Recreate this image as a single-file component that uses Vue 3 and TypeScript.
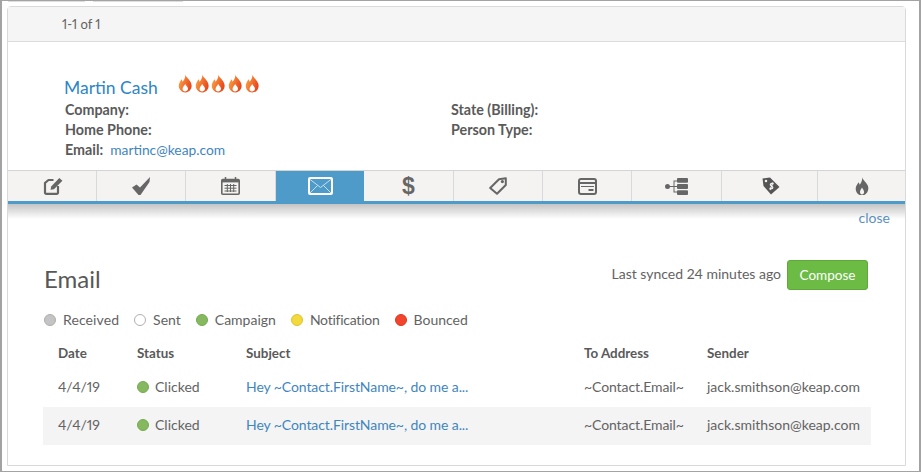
<script setup lang="ts">
const fields = [
  { label: 'Company:', value: '' },
  { label: 'Home Phone:', value: '' },
  { label: 'Email:', value: 'martinc@keap.com' },
]
const rightFields = ['State (Billing):', 'Person Type:']
const legend = [
  { name: 'Received', cls: 'grey' },
  { name: 'Sent', cls: 'white' },
  { name: 'Campaign', cls: 'green' },
  { name: 'Notification', cls: 'yellow' },
  { name: 'Bounced', cls: 'red' },
]
const rows = [0, 1]
const flames = [0, 1, 2, 3, 4]
const flamePath = 'M7.5 0.5C8 3 11.5 5 12.8 8.5C14.2 12.5 11.5 16.5 7.5 16.5C3.5 16.5 0.8 13 1.8 9C2.3 7 3.4 6 4 4.6C4.6 5.4 4.8 6.2 5 7C6.5 5.4 7.8 3 7.5 0.5ZM7.4 9C6.9 10.4 5 11.5 5 13.4C5 14.8 6 15.6 7.4 15.6C8.9 15.6 9.9 14.7 9.9 13.3C9.9 11.6 8 10.5 7.4 9Z'
</script>

<template>
  <div class="page">
    <div class="cut-off">
      <span class="cut-a"></span>
      <span class="cut-b"></span>
    </div>
    <div class="card">
      <div class="pager">1-1 of 1</div>
      <div class="contact">
        <div class="name-row">
          <a class="name">Martin Cash</a>
          <div class="flames">
            <svg v-for="f in flames" :key="f" class="flame" viewBox="0 0 15 17">
              <defs>
                <linearGradient :id="'fg' + f" x1="0" y1="0" x2="1" y2="0.5">
                  <stop offset="0" stop-color="#fbae4a" />
                  <stop offset="1" stop-color="#e9481b" />
                </linearGradient>
              </defs>
              <path :d="flamePath" :fill="'url(#fg' + f + ')'" fill-rule="evenodd" />
            </svg>
          </div>
        </div>
        <div class="fields">
          <div class="col">
            <div v-for="x in fields" :key="x.label" class="field">
              <b>{{ x.label }}</b><a v-if="x.value" class="link">{{ x.value }}</a>
            </div>
          </div>
          <div class="col">
            <div v-for="x in rightFields" :key="x" class="field"><b>{{ x }}</b></div>
          </div>
        </div>
      </div>

      <div class="tabs">
        <div class="tab">
          <svg class="i-edit" viewBox="0 0 20 18" width="20" height="18" fill="none" stroke="#666">
            <path d="M10.5 3H5.5L2 6V15.6A1.2 1.2 0 0 0 3.2 16.8H13.8A1.2 1.2 0 0 0 15 15.6V9" stroke-width="2.2" />
            <path d="M7.5 12.8L8.2 9.6L16.3 1L19.4 3.7L11 12.2Z" fill="#666" stroke="none" />
          </svg>
        </div>
        <div class="tab">
          <svg viewBox="0 0 18 18" width="18" height="18">
            <path d="M0 10.5L4.5 7.5L8 10.5L18 0L17.5 5L8.5 18H6.5Z" fill="#666" />
          </svg>
        </div>
        <div class="tab">
          <svg viewBox="0 0 19 18" width="19" height="18" fill="none" stroke="#666">
            <rect x="0.8" y="2.5" width="17.4" height="14.7" rx="1" stroke-width="1.6" />
            <path d="M1 4.2H18" stroke-width="2.4" />
            <path d="M4.5 0V3.5M14.5 0V3.5" stroke-width="1.5" />
            <path d="M3.5 8.5H15.5M3.5 11.2H15.5M3.5 14H15.5M6.3 7V15M9.5 7V15M12.7 7V15" stroke-width="1" />
          </svg>
        </div>
        <div class="tab active">
          <svg viewBox="0 0 25 18" width="25" height="18" fill="none">
            <rect x="1" y="1" width="23" height="16" rx="1" stroke="#fff" stroke-width="2" />
            <path d="M1.5 2L12.5 10.5L23.5 2M1.5 16.5L9.5 8.5M23.5 16.5L15.5 8.5" stroke="#d4e7f3" stroke-width="0.9" />
          </svg>
        </div>
        <div class="tab"><span class="dollar">$</span></div>
        <div class="tab">
          <svg viewBox="0 0 18 18" width="18" height="18" fill="none" stroke="#666" stroke-width="2" stroke-linejoin="round">
            <path d="M1.2 11L10 2.2L16.8 1.2L16.8 8L8 16.8Z" />
            <circle cx="13.4" cy="4.6" r="1.6" fill="#666" stroke="none" />
          </svg>
        </div>
        <div class="tab">
          <svg viewBox="0 0 19 17" width="19" height="17" fill="none" stroke="#666">
            <rect x="1" y="1" width="17" height="15" rx="2" stroke-width="2" />
            <path d="M1 5H18" stroke-width="2" />
            <path d="M3 8.5H16" stroke-width="1" />
            <path d="M10.5 12H15.5" stroke-width="2" />
          </svg>
        </div>
        <div class="tab">
          <svg viewBox="0 0 23 17" width="23" height="17" fill="#666">
            <circle cx="2.5" cy="8.5" r="2.5" />
            <path d="M2.5 8H13V9H2.5Z" />
            <path d="M8.5 2.5H13V3.5H9.5V13.5H13V14.5H8.5Z" />
            <rect x="12" y="0" width="11" height="4.8" rx="1" />
            <rect x="12" y="6.1" width="11" height="4.8" rx="1" />
            <rect x="12" y="12.2" width="11" height="4.8" rx="1" />
          </svg>
        </div>
        <div class="tab">
          <svg class="i-price" viewBox="0 0 18 18" width="18" height="18">
            <path fill-rule="evenodd" fill="#555" d="M0.5 1.5L8 0.5L17.5 10L9 17.5L1.5 9ZM4 2.7A1.3 1.3 0 1 0 4 5.3A1.3 1.3 0 1 0 4 2.7Z" />
            <path d="M11.6 7.2C10.6 6 8.6 6.2 8.3 7.6C8 9 11 9 10.8 10.6C10.6 12 8.6 12.2 7.6 11M11 5.5L8 13" fill="none" stroke="#f4f3f1" stroke-width="1.2" />
          </svg>
        </div>
        <div class="tab">
          <svg viewBox="0 0 14 18.5" width="14" height="18.5">
            <path fill-rule="evenodd" fill="#666" d="M7.2 0C7.6 3 11 5 12.8 8.5C14.6 12.8 11.8 18.5 7 18.5C2.4 18.5 -0.4 13.6 1.1 9.5C1.8 7.8 2.9 6.8 3.5 5.3C4.1 6 4.5 6.9 4.6 7.8C6.2 6 7.6 3 7.2 0ZM7 10.5C6.5 12 5 13 5 15C5 16.4 5.8 17.4 7 17.4C8.3 17.4 9.1 16.4 9.1 15C9.1 13 7.5 12 7 10.5Z" />
          </svg>
        </div>
      </div>
      <div class="shadow">
        <a class="close">close</a>
      </div>

      <div class="email">
        <div class="email-head">
          <h2>Email</h2>
          <div class="sync">
            <span class="sync-text">Last synced 24 minutes ago</span>
            <button class="compose" type="button">Compose</button>
          </div>
        </div>
        <div class="legend">
          <span v-for="l in legend" :key="l.name" class="legend-item">
            <i class="dot" :class="l.cls"></i><span class="legend-text">{{ l.name }}</span>
          </span>
        </div>
        <table>
          <thead>
            <tr>
              <th class="c-date">Date</th>
              <th class="c-status">Status</th>
              <th class="c-subject">Subject</th>
              <th class="c-to">To Address</th>
              <th class="c-sender">Sender</th>
            </tr>
          </thead>
          <tbody>
            <tr v-for="r in rows" :key="r">
              <td>4/4/19</td>
              <td class="status"><i class="dot green"></i>Clicked</td>
              <td class="tight"><a class="link">Hey ~Contact.FirstName~, do me a...</a></td>
              <td class="tight">~Contact.Email~</td>
              <td>jack.smithson@keap.com</td>
            </tr>
          </tbody>
        </table>
      </div>
    </div>
  </div>
</template>

<style>
html, body { margin: 0; background: #fff; }
</style>

<style scoped>
.page {
  width: 921px;
  height: 472px;
  box-sizing: border-box;
  border-left: 2px solid #a3a3a3;
  border-top: 1px solid #a3a3a3;
  border-right: 2px solid #a3a3a3;
  border-bottom: 1px solid #a3a3a3;
  padding: 0 13px 5px 5px;
  font-family: "Lato", "Open Sans", sans-serif;
  font-size: 14px;
  font-variant-numeric: proportional-nums;
  color: #636363;
  overflow: hidden;
  display: flex;
  flex-direction: column;
}
.cut-off { display: flex; height: 1px; margin-bottom: 4px; flex: none; }
.cut-off span { height: 1px; background: #dedede; }
.cut-a { width: 77px; margin-left: 1px; margin-right: 8px; }
.cut-b { width: 90px; }
.card {
  flex: 1;
  min-height: 0;
  box-sizing: border-box;
  border: 1px solid #d9d9d9;
  border-top-left-radius: 4px;
  border-top-right-radius: 4px;
}
.pager {
  height: 34px;
  line-height: 35px;
  padding-left: 54px;
  background: #f5f5f5;
  border-bottom: 1px solid #dcdcdc;
  font-size: 13px;
}
.contact { height: 128px; padding: 33px 0 0 57px; box-sizing: border-box; }
.name-row { display: flex; align-items: center; height: 25px; }
.name { color: #2d86c4; font-size: 17.5px; width: 113px; margin-left: -1px; }
.flames { display: flex; align-self: flex-start; margin-top: -1px; }
.flame { width: 16.67px; height: 19px; }
.fields { display: flex; }
.col { width: 386px; }
.field { height: 20px; line-height: 20px; }
.field b { font-weight: 700; font-size: 14.3px; color: #5a5a5a; margin-right: 7px; }
.field .link { font-size: 13.8px; }
.link { color: #3f86bd; }
.tabs {
  display: grid;
  grid-template-columns: 89px 89px 90px 88px 90px 89px 89px 90px 96px 1fr;
  height: 30px;
  background: #f4f3f1;
  border-top: 1px solid #d4d4d4;
}
.tab {
  display: flex;
  align-items: center;
  justify-content: center;
  border-right: 1px solid #d9d9d9;
  box-sizing: border-box;
}
.tab:last-child { border-right: 0; }
.tab.active { background: #4e9bc9; border-right: 0; }
.i-edit { margin-left: 2px; }
.i-price { margin-left: 2px; margin-top: -1px; }
.dollar {
  font-family: "Liberation Sans", sans-serif;
  font-weight: 700;
  font-size: 23px;
  line-height: 1;
  color: #666;
}
.shadow {
  border-top: 3px solid #4e9bc9;
  height: 30px;
  background: linear-gradient(#c4c4c4, #fff 15px);
  text-align: right;
  padding-right: 15px;
  line-height: 27px;
}
.close { color: #5b8fc0; }
.email { padding: 0 37px 0 36px; }
.email-head { display: flex; justify-content: space-between; align-items: center; padding-top: 24px; height: 34px; }
h2 { margin: 6px 0 0; font-size: 24px; font-weight: 400; color: #585858; }
.sync { display: flex; align-items: center; gap: 6px; }
.sync-text { margin-top: -3px; }
.compose {
  width: 81px;
  height: 30px;
  background: #6cbb45;
  border: 1px solid #5fa83a;
  border-radius: 3px;
  color: #fff;
  font: inherit;
  font-size: 13.5px;
  padding: 0;
}
.legend { display: flex; margin-top: 16px; height: 24px; align-items: center; }
.legend-item { margin-right: 15px; display: flex; align-items: center; }
.legend-text { margin-top: -1px; }
.legend-item:nth-child(1) .legend-text { letter-spacing: 0.1px; }
.legend-item:nth-child(4) .legend-text { letter-spacing: -0.25px; }
.dot {
  display: inline-block;
  width: 12px;
  height: 12px;
  box-sizing: border-box;
  border-radius: 50%;
  margin-right: 7px;
  vertical-align: -1px;
  border: 1px solid transparent;
}
.grey { background: #c4c4c4; border-color: #adadad; }
.white { background: #fff; border-color: #b0b0b0; }
.green { background: #86b85f; border-color: #76ab50; }
.yellow { background: #f2d93c; border-color: #dcc332; }
.red { background: #f2452b; border-color: #d93a22; }
table { border-collapse: collapse; table-layout: fixed; width: 828px; margin: 9px 0 0 -1px; }
th { text-align: left; font-weight: 700; height: 28px; padding: 0 0 4px 14px; font-size: 13.4px; color: #5a5a5a; box-sizing: border-box; }
td { height: 38px; padding: 0 0 3px 14px; white-space: nowrap; box-sizing: border-box; }
th:first-child, td:first-child { padding-left: 15px; }
.status .dot { margin-right: 6px; }
.tight { letter-spacing: -0.09px; }
tbody tr:nth-child(2) td { background: #f4f4f4; }
.c-date { width: 80px; box-sizing: border-box; }
.c-status { width: 109px; box-sizing: border-box; }
.c-subject { width: 338px; box-sizing: border-box; }
.c-to { width: 123px; box-sizing: border-box; }
</style>
